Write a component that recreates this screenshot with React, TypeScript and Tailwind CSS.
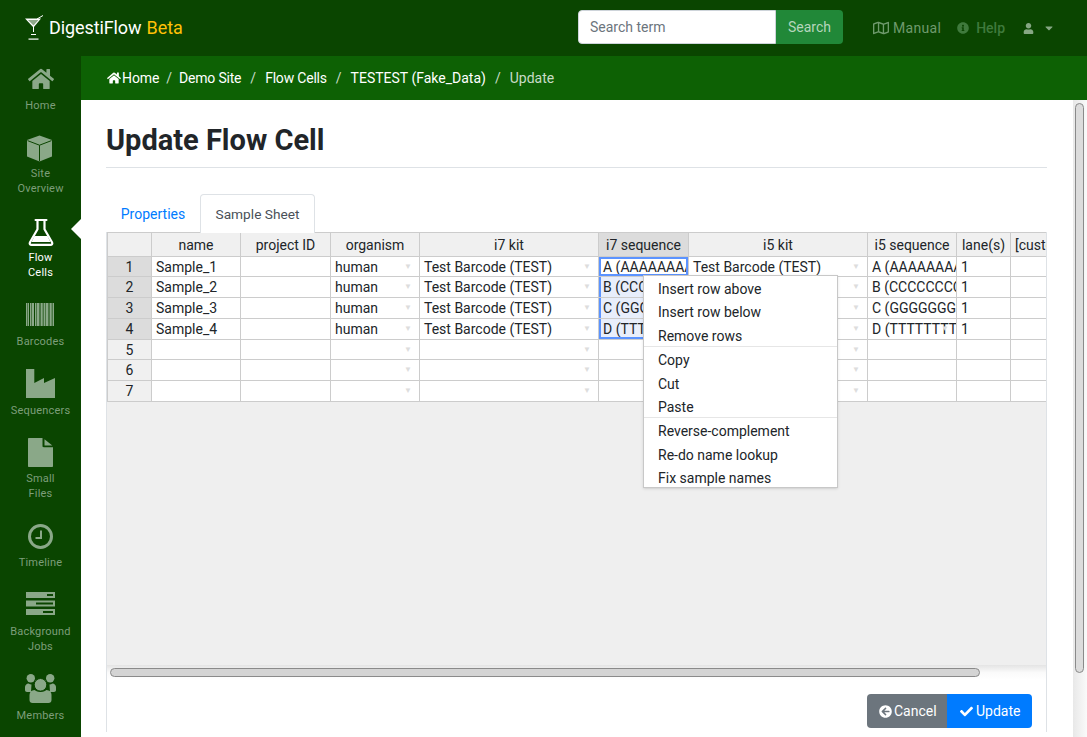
import React from 'react'
import {
  FaHome,
  FaRegMap,
  FaInfoCircle,
  FaUser,
  FaCaretDown,
  FaArrowCircleLeft,
  FaCheck,
} from 'react-icons/fa'

const BG = '#0a4500'

function CubeIcon() {
  return (
    <svg width="27" height="27" viewBox="0 0 27 27" fill="currentColor" className="block mr-[2px]">
      <path d="M13.5 0.5 26 5v16.5L13.5 26.5 1 21.5V5z" />
      <path d="M1.5 5.6l12 4.6 12-4.6M13.5 10.2v16" fill="none" stroke={BG} strokeWidth="1" />
    </svg>
  )
}

function FlaskIcon() {
  return (
    <svg width="26" height="27" viewBox="0 0 26 27" fill="none" className="block">
      <path d="M7.5 1h11" stroke="#fff" strokeWidth="2" strokeLinecap="round" />
      <path
        d="M9.5 1.5v8.7L2 23.2c-.8 1.5 0 2.6 1.6 2.6h18.8c1.6 0 2.4-1.1 1.6-2.6L16.5 10.2V1.5"
        stroke="#fff"
        strokeWidth="2.2"
        strokeLinejoin="round"
      />
      <path d="M6.5 17h13l3 6H3.5z" fill="#fff" />
    </svg>
  )
}

const barcodeStripes = [0, 2, 4, 5.5, 7, 9, 10.5, 12, 13.5, 15, 16.5, 18, 19.5, 21, 22.5, 24, 25.5, 27]

function BarcodeIcon() {
  return (
    <svg width="29" height="23" viewBox="0 0 29 23" fill="currentColor" className="block">
      {barcodeStripes.map((x, i) => (
        <rect key={x} x={x} y="0" width={i % 3 === 0 ? 1.5 : 1} height="23" />
      ))}
    </svg>
  )
}

function IndustryIcon() {
  return (
    <svg width="29" height="29" viewBox="0 0 29 29" fill="currentColor" className="block">
      <path d="M0 0h8.3v14L18 9v5l11-5v20H0z" />
    </svg>
  )
}

function FileIcon() {
  return (
    <svg width="25" height="29" viewBox="0 0 25 29" fill="currentColor" className="block">
      <path d="M1 0h13.5v8c0 .8.5 1.2 1.2 1.2H25V28c0 .6-.4 1-1 1H1c-.6 0-1-.4-1-1V1c0-.6.4-1 1-1z" />
      <path d="M16.5 1.2 24.3 7.5h-7.8z" />
    </svg>
  )
}

function ClockIcon() {
  return (
    <svg width="25" height="25" viewBox="0 0 25 25" fill="none" stroke="currentColor" className="block">
      <circle cx="12.5" cy="12.5" r="11" strokeWidth="3" />
      <path d="M13 6.5v7.5H7.5" strokeWidth="2" />
    </svg>
  )
}

function ServerIcon() {
  return (
    <svg width="29" height="23" viewBox="0 0 29 23" className="block">
      <rect x="0" y="0" width="29" height="6" fill="currentColor" />
      <rect x="0" y="8.5" width="29" height="6" fill="currentColor" />
      <rect x="0" y="17" width="29" height="6" fill="currentColor" />
      <rect x="21" y="2" width="6" height="2" fill={BG} />
      <rect x="10" y="10.5" width="17" height="2" fill={BG} />
      <rect x="17" y="19" width="10" height="2" fill={BG} />
    </svg>
  )
}

function UsersIcon() {
  return (
    <svg width="31" height="29" viewBox="0 0 31 29" fill="currentColor" className="block">
      <circle cx="5.8" cy="4.3" r="4.2" />
      <circle cx="25.2" cy="4.3" r="4.2" />
      <path d="M0 13c0-2 1.5-3.4 3.5-3.6 1 .6 2 1 3 1L6 18H2c-1.2 0-2-.8-2-2z" />
      <path d="M31 13c0-2-1.5-3.4-3.5-3.6-1 .6-2 1-3 1L25 18h4c1.2 0 2-.8 2-2z" />
      <path d="M4.5 26V21c0-3.2 2.2-4.8 5-5 1.5 1.3 3.6 2 6 2s4.500-.7 6-2c2.800.2 5 1.800 5 5v5c0 2-1.200 3-3 3h-16c-1.800 0-3-1-3-3z" />
      <circle cx="15.500" cy="10.800" r="6.300" stroke={BG} strokeWidth="1" />
    </svg>
  )
}

const navItems = [
  { label: ['Home'], icon: <FaHome size={26} className="block" />, h: 'h-[68px]', pt: 'pt-[2px]' },
  { label: ['Site', 'Overview'], icon: <CubeIcon />, h: 'h-[84px]', pt: 'pt-[3px]' },
  { label: ['Flow', 'Cells'], icon: <FlaskIcon />, h: 'h-[84px]', pt: 'pt-[3px]', active: true },
  { label: ['Barcodes'], icon: <BarcodeIcon />, h: 'h-[69px]', pt: 'pt-[3px]' },
  { label: ['Sequencers'], icon: <IndustryIcon />, h: 'h-[68px]', pt: 'pt-0' },
  { label: ['Small', 'Files'], icon: <FileIcon />, h: 'h-[84px]', pt: 'pt-[1px]' },
  { label: ['Timeline'], icon: <ClockIcon />, h: 'h-[69px]', pt: 'pt-[3px]' },
  { label: ['Background', 'Jobs'], icon: <ServerIcon />, h: 'h-[84px]', pt: 'pt-[2px]' },
  { label: ['Members'], icon: <UsersIcon />, h: 'h-[68px]', pt: 'pt-0' },
]

const columns = [
  { name: 'name', w: 'w-[89px]' },
  { name: 'project ID', w: 'w-[90px]' },
  { name: 'organism', w: 'w-[89px]' },
  { name: 'i7 kit', w: 'w-[179px]' },
  { name: 'i7 sequence', w: 'w-[90px]' },
  { name: 'i5 kit', w: 'w-[179px]' },
  { name: 'i5 sequence', w: 'w-[89px]' },
  { name: 'lane(s)', w: 'w-[54px]' },
  { name: '[custom barcode]', w: 'w-[90px]' },
]

const samples = [
  ['Sample_1', '', 'human', 'Test Barcode (TEST)', 'A (AAAAAAAAAA)', 'Test Barcode (TEST)', 'A (AAAAAAAAAA)', '1', ''],
  ['Sample_2', '', 'human', 'Test Barcode (TEST)', 'B (CCCCCCCCCC)', 'Test Barcode (TEST)', 'B (CCCCCCCCCC)', '1', ''],
  ['Sample_3', '', 'human', 'Test Barcode (TEST)', 'C (GGGGGGGGGG)', 'Test Barcode (TEST)', 'C (GGGGGGGGGG)', '1', ''],
  ['Sample_4', '', 'human', 'Test Barcode (TEST)', 'D (TTTTTTTTTT)', 'Test Barcode (TEST)', 'D (TTTTTTTTTT)', '1', ''],
  ['', '', '', '', '', '', '', '', ''],
  ['', '', '', '', '', '', '', '', ''],
  ['', '', '', '', '', '', '', '', ''],
]

const rowHeights = ['h-[20px]', 'h-[21px]', 'h-[21px]', 'h-[21px]', 'h-[20px]', 'h-[21px]', 'h-[21px]']
const dropdownCols = [2, 3, 5]

const menuGroups = [
  ['Insert row above', 'Insert row below', 'Remove rows'],
  ['Copy', 'Cut', 'Paste'],
  ['Reverse-complement', 'Re-do name lookup', 'Fix sample names'],
]

function ShakerLogo() {
  return (
    <svg width="19" height="25" viewBox="0 0 19 25" className="mr-[5px] mt-[-2px]">
      <path d="M0 3.500h16L8.500 12.500z" fill="#fff" />
      <path d="M3 5h10.500L8.500 10.500z" fill="#8fa98a" />
      <path d="M12 4l6-3.500" stroke="#fff" strokeWidth="1" />
      <rect x="8" y="12" width="1" height="5" fill="#fff" />
      <rect x="6" y="19" width="5" height="1" fill="#fff" />
      <rect x="3.500" y="23.500" width="10" height="1.200" fill="#fff" />
    </svg>
  )
}

function Sidebar() {
  return (
    <nav className="w-[81px] shrink-0 bg-[#0a4500] pt-[8px] overflow-hidden">
      {navItems.map((item) => (
        <div
          key={item.label.join(' ')}
          className={`relative flex flex-col items-center ${item.h} ${item.active ? 'text-white' : 'text-[#8aa888]'}`}
        >
          <div className={`h-[32px] flex items-start justify-center ${item.pt}`}>{item.icon}</div>
          <div
            className={`mt-[2px] text-center text-[11px] leading-[15px] tracking-[0.2px] ${item.active ? 'text-white' : 'text-[#7d9e7a]'}`}
          >
            {item.label.map((l) => (
              <div key={l}>{l}</div>
            ))}
          </div>
          {item.active && (
            <div className="absolute right-0 top-[3px] w-0 h-0 border-y-[10px] border-y-transparent border-r-[10px] border-r-white" />
          )}
        </div>
      ))}
    </nav>
  )
}

function Navbar() {
  return (
    <header className="h-[56px] shrink-0 bg-[#0a4500] flex items-center pl-[25px] pr-[32px]">
      <ShakerLogo />
      <span className="text-[18px] text-white mt-[-2px] tracking-[-0.1px]">DigestiFlow</span>
      <span className="text-[18px] text-[#ffc107] ml-[5px] mt-[-2px]">Beta</span>
      <div className="flex ml-auto mr-[30px] mb-[2px]">
        <input
          placeholder="Search term"
          className="w-[198px] h-[34px] bg-white rounded-l border border-[#ced4da] px-[11px] text-[14px] placeholder:text-[#6c757d] outline-none"
        />
        <button className="w-[67px] h-[34px] bg-[#218838] text-[#b5d6bc] text-[14px] rounded-r">Search</button>
      </div>
      <div className="flex items-center text-[14px] text-[#6f9a6c] tracking-[0.3px]">
        <FaRegMap size={16} className="mr-[4px]" />
        <span>Manual</span>
      </div>
      <div className="flex items-center text-[14px] text-[#3f7a3c] font-medium ml-[16px]">
        <FaInfoCircle size={12} className="mr-[7px]" />
        <span>Help</span>
      </div>
      <div className="flex items-center text-[#86a783] ml-[18px]">
        <FaUser size={11} />
        <FaCaretDown size={12} className="ml-[9px]" />
      </div>
    </header>
  )
}

function Breadcrumb() {
  return (
    <div className="h-[44px] shrink-0 bg-[#0d6104] flex items-center pl-[26px] text-[14px] text-white">
      <FaHome size={14} className="mr-[1px]" />
      <span className="tracking-[-0.1px]">Home</span>
      <span className="mx-[7px] text-[#c9dcc7]">/</span>
      <span className="tracking-[-0.2px]">Demo Site</span>
      <span className="mx-[9px] text-[#c9dcc7]">/</span>
      <span className="tracking-[-0.2px]">Flow Cells</span>
      <span className="mx-[9px] text-[#c9dcc7]">/</span>
      <span>TESTEST (Fake_Data)</span>
      <span className="mx-[9px] text-[#c9dcc7]">/</span>
      <span className="text-[#c9dcc7]">Update</span>
    </div>
  )
}

function ContextMenu() {
  return (
    <div className="absolute left-[536px] top-[43px] w-[195px] h-[213px] bg-white border border-[#c8c8c8] shadow-sm text-[14px] text-[#212529] overflow-hidden">
      {menuGroups.map((group, i) => (
        <div key={group[0]} className={i > 0 ? 'border-t border-[#e6e6e6]' : ''}>
          {group.map((label) => (
            <div key={label} className="h-[23.4px] leading-[27px] pl-[14px]">
              {label}
            </div>
          ))}
        </div>
      ))}
    </div>
  )
}

function SheetTable() {
  return (
    <div className="relative h-[433px] bg-[#efefef] overflow-hidden">
      <table className="table-fixed border-collapse text-[14px] leading-[18px] text-[#212529] w-[893px] min-w-[893px]">
        <thead>
          <tr className="h-[24px]">
            <th className="w-[44px] border border-[#cccccc] bg-[#f0f0f0]" />
            {columns.map((c, i) => (
              <th
                key={c.name}
                className={`${c.w} border border-[#cccccc] font-normal whitespace-nowrap overflow-hidden ${i === 8 ? 'pl-[4px] text-left' : 'px-0 text-center'} ${i === 4 ? 'bg-[#dcdcdc]' : 'bg-[#f0f0f0]'}`}
              >
                {c.name}
              </th>
            ))}
          </tr>
        </thead>
        <tbody>
          {samples.map((row, r) => (
            <tr key={r} className={rowHeights[r]}>
              <th className={`border border-[#cccccc] p-0 font-normal ${r < 4 ? 'bg-[#dcdcdc]' : 'bg-[#f0f0f0]'}`}>{r + 1}</th>
              {row.map((cell, c) => {
                const selected = c === 4 && r < 4
                return (
                  <td
                    key={c}
                    className={`relative border border-[#cccccc] p-0 pl-[4px] whitespace-nowrap overflow-hidden ${selected && r > 0 ? 'bg-[#e8eefb]' : 'bg-white'}`}
                  >
                    {cell}
                    {(dropdownCols.includes(c) || (c === 6 && r === 3)) && (
                      <span className="absolute right-[7px] top-[3px] text-[8px] text-[#dddddd] leading-[14px]">▼</span>
                    )}
                    {selected && (
                      <span
                        className={`absolute inset-0 pointer-events-none border-l-2 border-[#5b93ff] ${r === 0 ? 'border-2' : ''} ${r === 3 ? 'border-b-2' : ''}`}
                      />
                    )}
                  </td>
                )
              })}
            </tr>
          ))}
        </tbody>
      </table>
      <ContextMenu />
    </div>
  )
}

function ScrollbarH() {
  return (
    <div className="h-[15px] bg-gradient-to-b from-[#e4e4e4] via-[#fafafa] to-white flex items-center pl-[3px]">
      <div className="w-[870px] h-[9px] bg-[#d4d4d4] border border-[#8a8a8a] rounded-full" />
    </div>
  )
}

export default function App() {
  return (
    <div className="h-screen overflow-hidden flex flex-col font-['Roboto',sans-serif] bg-white">
      <Navbar />
      <div className="flex flex-1 min-h-0">
        <Sidebar />
        <div className="flex-1 flex flex-col min-w-0">
          <Breadcrumb />
          <div className="flex flex-1 min-h-0">
            <main className="flex-1 min-w-0 pl-[25px] pr-[26px] overflow-hidden">
              <h1 className="mt-[21px] h-[47px] leading-[38px] text-[29px] font-bold text-[#212529] border-b border-[#dee2e6]">
                Update Flow Cell
              </h1>
              <div className="mt-[26px] flex h-[38px] text-[14px]">
                <div className="w-[94px] text-center leading-[40px] text-[#007bff]">Properties</div>
                <div className="w-[115px] text-center text-[13.7px] leading-[38px] text-[#495057] bg-white border border-b-0 border-[#dee2e6] rounded-t -mb-px z-10">
                  Sample Sheet
                </div>
              </div>
              <div className="border-x border-[#dee2e6] h-[500px]">
                <SheetTable />
                <ScrollbarH />
                <div className="flex justify-end pt-[14px] pr-[14px]">
                  <button className="h-[34px] w-[80px] bg-[#6c757d] text-white text-[14px] rounded-l flex items-center pl-[12px] gap-[2px]">
                    <FaArrowCircleLeft size={13} />
                    Cancel
                  </button>
                  <button className="h-[34px] w-[85px] bg-[#007bff] text-white text-[14px] rounded-r flex items-center pl-[13px] gap-[3px]">
                    <FaCheck size={13} />
                    Update
                  </button>
                </div>
              </div>
            </main>
            <div className="w-[14px] shrink-0 bg-gradient-to-r from-[#e8e8e8] to-[#fafafa] pt-[3px] pl-[2px]">
              <div className="w-[9px] h-[570px] bg-[#dcdcdc] border border-[#8a8a8a] rounded-full" />
            </div>
          </div>
        </div>
      </div>
    </div>
  )
}
